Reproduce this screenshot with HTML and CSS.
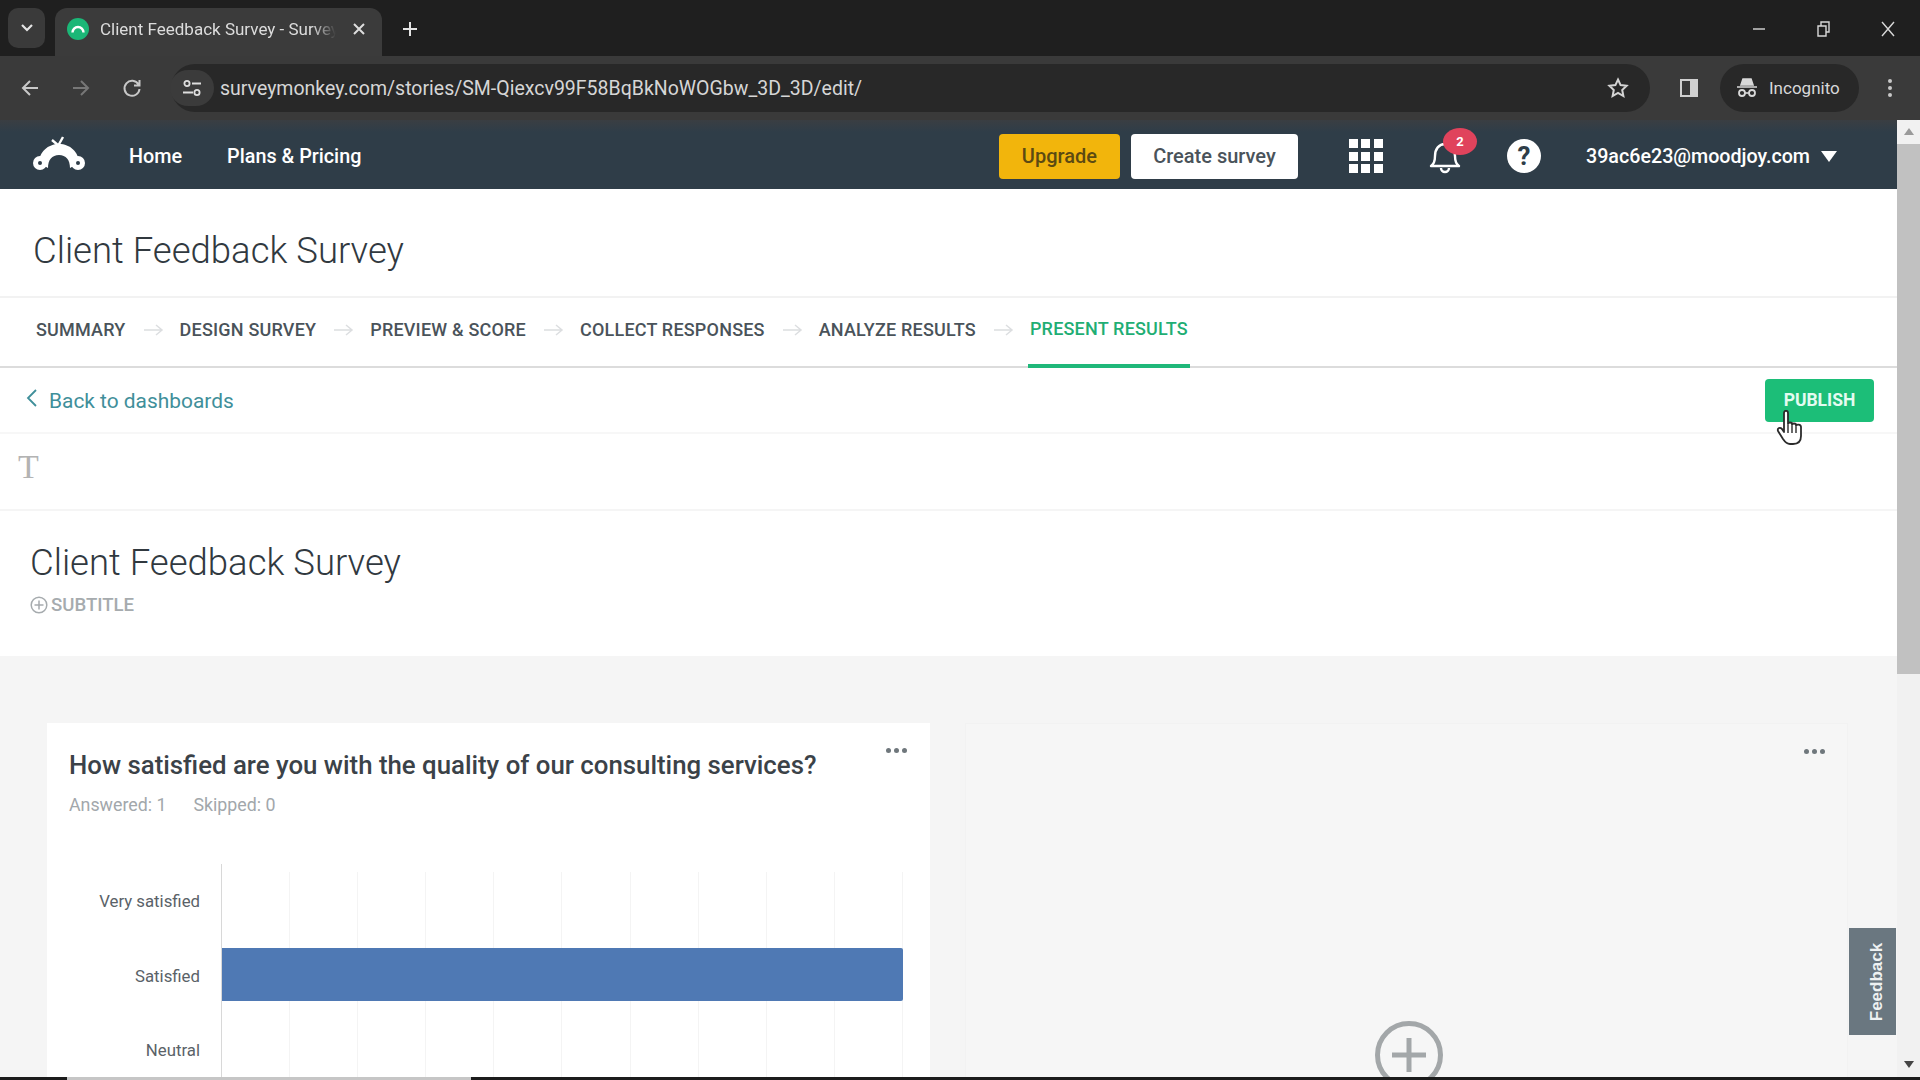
FILE: index.html
```html
<!DOCTYPE html>
<html lang="en">
<head>
    <meta charset="UTF-8">
    <title>Client Feedback Survey - SurveyMonkey</title>
    <link rel="stylesheet" href="styles.css">
</head>
<body>
    <!-- browser chrome -->
    <div class="tabstrip">
        <div class="tab-search">
            <svg width="14" height="10" viewBox="0 0 14 10"><path d="M2 2l5 5 5-5" fill="none" stroke="#e4e4e4" stroke-width="2.2"/></svg>
        </div>
        <div class="tab">
            <span class="favicon">
                <svg width="16" height="12" viewBox="0 0 16 12"><path d="M2.5 9.5a5.5 5.5 0 0 1 11 0" fill="none" stroke="#fff" stroke-width="2.4"/></svg>
            </span>
            <span class="tab-title">Client Feedback Survey - Survey</span>
            <svg class="tab-close" width="14" height="14" viewBox="0 0 14 14"><path d="M2 2l10 10M12 2L2 12" stroke="#ddd" stroke-width="2"/></svg>
        </div>
        <svg class="tab-new" width="18" height="18" viewBox="0 0 18 18"><path d="M9 2v14M2 9h14" stroke="#e4e4e4" stroke-width="2"/></svg>
        <div class="win-controls">
            <svg width="14" height="14" viewBox="0 0 14 14"><path d="M1 7h12" stroke="#d8d8d8" stroke-width="1.4"/></svg>
            <svg width="16" height="16" viewBox="0 0 16 16"><path d="M3 5h8v10H3zM6 5V1h8v10h-3" fill="none" stroke="#d8d8d8" stroke-width="1.4"/></svg>
            <svg width="16" height="16" viewBox="0 0 16 16"><path d="M2 1l12 14M14 1L2 15" stroke="#d8d8d8" stroke-width="1.4"/></svg>
        </div>
    </div>
    <div class="toolbar">
        <svg class="tool-btn" width="20" height="20" viewBox="0 0 20 20"><path d="M18 10H3M10 3l-7 7 7 7" fill="none" stroke="#c8c8c8" stroke-width="2"/></svg>
        <svg class="tool-btn" width="20" height="20" viewBox="0 0 20 20"><path d="M2 10h15M10 3l7 7-7 7" fill="none" stroke="#777" stroke-width="2"/></svg>
        <svg class="tool-btn" width="20" height="20" viewBox="0 0 20 20"><path d="M16.500 6.500A7.500 7.500 0 1 0 17.500 11M17.500 2v5.500H12" fill="none" stroke="#c8c8c8" stroke-width="2"/></svg>
        <div class="omnibox">
            <span class="site-info">
                <svg width="20" height="18" viewBox="0 0 20 18"><circle cx="5" cy="4.500" r="2.600" fill="none" stroke="#ddd" stroke-width="1.800"/><path d="M10 4.500h9M1 13.500h10" stroke="#ddd" stroke-width="2"/><circle cx="15" cy="13.500" r="2.600" fill="none" stroke="#ddd" stroke-width="1.800"/></svg>
            </span>
            <span class="url">surveymonkey.com/stories/SM-Qiexcv99F58BqBkNoWOGbw_3D_3D/edit/</span>
            <svg class="star" width="22" height="22" viewBox="0 0 22 22"><path d="M11 2.500l2.600 5.600 6 .7-4.400 4.200 1.200 6L11 16l-5.400 3 1.200-6L2.400 8.800l6-.7z" fill="none" stroke="#d4d4d4" stroke-width="2"/></svg>
        </div>
        <svg class="side-panel" width="20" height="20" viewBox="0 0 20 20"><rect x="1" y="1" width="18" height="18" fill="#d0d0d0"/><rect x="3" y="3" width="8" height="14" fill="#3a3a3a"/></svg>
        <div class="incognito">
            <svg width="22" height="22" viewBox="0 0 22 22"><path d="M7 2h8l2 6H5zM1 10h20" fill="#d8d8d8" stroke="#d8d8d8" stroke-width="1.600"/><circle cx="6" cy="16" r="3" fill="none" stroke="#d8d8d8" stroke-width="1.800"/><circle cx="16" cy="16" r="3" fill="none" stroke="#d8d8d8" stroke-width="1.800"/><path d="M9 16h4" stroke="#d8d8d8" stroke-width="1.600"/></svg>
            <span>Incognito</span>
        </div>
        <div class="kebab"><i></i><i></i><i></i></div>
    </div>

    <div class="viewport">
        <div class="page">
            <!-- site nav -->
            <nav class="topnav">
                <svg class="logo" width="52" height="38" viewBox="0 0 52 38">
                    <path d="M6 27C6 16 15 8 26 8s20 8 20 19l-9 5c0-8-4-13-11-13s-11 5-11 13z" fill="#fff"/>
                    <circle cx="7" cy="27" r="7" fill="#fff"/><circle cx="45" cy="27" r="7" fill="#fff"/>
                    <circle cx="7" cy="27" r="2" fill="#2f3d48"/><circle cx="45" cy="27" r="2" fill="#2f3d48"/>
                    <path d="M25 10l5-9M26 10L19 4" stroke="#fff" stroke-width="2.400"/>
                </svg>
                <a class="nav-link home">Home</a>
                <a class="nav-link">Plans &amp; Pricing</a>
                <div class="nav-right">
                    <button class="btn-upgrade">Upgrade</button>
                    <button class="btn-create">Create survey</button>
                    <div class="apps">
                        <i></i><i></i><i></i><i></i><i></i><i></i><i></i><i></i><i></i>
                    </div>
                    <div class="bell">
                        <svg width="34" height="38" viewBox="0 0 34 38"><path d="M3 29c3-2 4-5 4-10 0-7 4-12 10-12s10 5 10 12c0 5 1 8 4 10z" fill="none" stroke="#fff" stroke-width="2.400" stroke-linejoin="round"/><path d="M13 31a4 4 0 0 0 8 0" fill="none" stroke="#fff" stroke-width="2.400"/></svg>
                        <span class="badge">2</span>
                    </div>
                    <div class="help">?</div>
                    <div class="account">39ac6e23@moodjoy.com</div>
                    <svg class="caret" width="16" height="11" viewBox="0 0 16 11"><path d="M0 0h16L8 11z" fill="#fff"/></svg>
                </div>
            </nav>

            <header class="survey-head">
                <h1>Client Feedback Survey</h1>
            </header>

            <div class="steps">
                <a class="step">Summary</a><svg class="arrow" width="54" height="14" viewBox="0 0 54 14"><path d="M18 7h18M30 2l6 5-6 5" fill="none" stroke="#dcdee0" stroke-width="1.500"/></svg>
                <a class="step">Design Survey</a><svg class="arrow" width="54" height="14" viewBox="0 0 54 14"><path d="M18 7h18M30 2l6 5-6 5" fill="none" stroke="#dcdee0" stroke-width="1.500"/></svg>
                <a class="step">Preview &amp; Score</a><svg class="arrow" width="54" height="14" viewBox="0 0 54 14"><path d="M18 7h18M30 2l6 5-6 5" fill="none" stroke="#dcdee0" stroke-width="1.500"/></svg>
                <a class="step">Collect Responses</a><svg class="arrow" width="54" height="14" viewBox="0 0 54 14"><path d="M18 7h18M30 2l6 5-6 5" fill="none" stroke="#dcdee0" stroke-width="1.500"/></svg>
                <a class="step">Analyze Results</a><svg class="arrow" width="54" height="14" viewBox="0 0 54 14"><path d="M18 7h18M30 2l6 5-6 5" fill="none" stroke="#dcdee0" stroke-width="1.500"/></svg>
                <a class="step active">Present Results</a>
            </div>

            <div class="actions">
                <a class="back">
                    <svg width="12" height="20" viewBox="0 0 12 20"><path d="M10 2L2 10l8 8" fill="none" stroke="#3f8f9a" stroke-width="1.800"/></svg>
                    Back to dashboards
                </a>
                <button class="btn-publish">PUBLISH</button>
            </div>

            <div class="format-bar"><span class="t-icon">T</span></div>

            <div class="story-head">
                <h2>Client Feedback Survey</h2>
                <div class="subtitle">
                    <svg width="18" height="18" viewBox="0 0 18 18"><circle cx="9" cy="9" r="7.800" fill="none" stroke="#a6abae" stroke-width="1.500"/><path d="M9 4.500v9M4.500 9h9" stroke="#a6abae" stroke-width="1.500"/></svg>
                    SUBTITLE
                </div>
            </div>

            <div class="board">
                <section class="card">
                    <div class="dots"><i></i><i></i><i></i></div>
                    <h3>How satisfied are you with the quality of our consulting services?</h3>
                    <div class="counts"><span>Answered: 1</span><span>Skipped: 0</span></div>
                    <div class="chart">
                        <div class="labels">
                            <span>Very satisfied</span>
                            <span>Satisfied</span>
                            <span>Neutral</span>
                        </div>
                        <div class="plot">
                            <div class="gridlines"><i></i><i></i><i></i><i></i><i></i><i></i><i></i><i></i><i></i><i></i></div>
                            <div class="bar"></div>
                        </div>
                    </div>
                </section>
                <section class="card empty">
                    <div class="dots"><i></i><i></i><i></i></div>
                    <div class="add-tile">
                        <svg width="68" height="68" viewBox="0 0 68 68"><circle cx="34" cy="34" r="31.500" fill="none" stroke="#a3a7a9" stroke-width="5"/><path d="M34 17v34M17 34h34" stroke="#a3a7a9" stroke-width="5"/></svg>
                    </div>
                </section>
            </div>

            <a class="feedback"><span>Feedback</span></a>
            <svg class="hand" width="28" height="36" viewBox="0 0 28 36">
                <path d="M8 3c0-3 4-3 4 0v11c0-2 4-2 4 0v1c0-2 4-2 4 0v1c0-2 5-2 5 1v9c0 5-3 8-8 8h-3c-3 0-5-2-7-5l-5-8c-1-3 2-4 4-2l2 3z" fill="#fff" stroke="#2b2b2b" stroke-width="1.800" stroke-linejoin="round"/>
                <path d="M12 15v8M16 16v7M20 17v6" stroke="#2b2b2b" stroke-width="1.400"/>
            </svg>
        </div>
        <div class="scrollbar">
            <svg width="10" height="7" viewBox="0 0 10 7"><path d="M5 0l5 7H0z" fill="#9a9a9a"/></svg>
            <div class="scroll-track"><div class="scroll-thumb"></div></div>
            <svg width="10" height="7" viewBox="0 0 10 7"><path d="M5 7L0 0h10z" fill="#444"/></svg>
        </div>
    </div>

    <!-- video player strip along the bottom edge -->
    <div class="progress"><div class="progress-fill"></div></div>
</body>
</html>
```

FILE: styles.css
```css
* { box-sizing: border-box; }

html, body {
    margin: 0;
    height: 1080px;
    overflow: hidden;
    font-family: "Roboto", "Liberation Sans", sans-serif;
    background: #fff;
}

/* browser chrome */
.tabstrip {
    height: 56px;
    background: #1f1f1f;
    display: flex;
    align-items: flex-end;
    position: relative;
}
.tab-search {
    width: 37px;
    height: 40px;
    margin: 0 10px 8px 8px;
    background: #3a3a3a;
    border-radius: 10px;
    display: flex;
    align-items: center;
    justify-content: center;
}
.tab {
    width: 327px;
    height: 48px;
    background: #3b3b3b;
    border-radius: 12px 12px 0 0;
    display: flex;
    align-items: center;
    padding: 0 16px 6px 12px;
}
.favicon {
    width: 22px;
    height: 22px;
    flex: none;
    border-radius: 50%;
    background: #1bb777;
    display: flex;
    align-items: center;
    justify-content: center;
}
.tab-title {
    flex: 1;
    margin-left: 11px;
    color: #dcdcdc;
    font-size: 17px;
    white-space: nowrap;
    overflow: hidden;
    -webkit-mask-image: linear-gradient(to right, #000 90%, transparent 100%);
    mask-image: linear-gradient(to right, #000 90%, transparent 100%);
}
.tab-close { margin-left: 16px; flex: none; }
.tab-new { margin: 0 0 18px 19px; }
.win-controls {
    margin-left: auto;
    display: flex;
    align-items: center;
    gap: 49px;
    padding: 0 24px 19px 0;
}

.toolbar {
    height: 64px;
    background: #3a3a3a;
    display: flex;
    align-items: center;
    padding-left: 20px;
    position: relative;
}
.tool-btn { margin-right: 31px; flex: none; }
.tool-btn:nth-of-type(3) { margin-right: 29px; }
.omnibox {
    width: 1479px;
    height: 48px;
    background: #282828;
    border-radius: 24px;
    display: flex;
    align-items: center;
    flex: none;
}
.site-info {
    width: 44px;
    height: 36px;
    margin-left: -1px;
    border-radius: 18px;
    background: #3b3b3b;
    display: flex;
    align-items: center;
    justify-content: center;
}
.url {
    margin-left: 6px;
    margin-top: 1px;
    color: #d6d6d6;
    font-size: 19.500px;
    white-space: nowrap;
}
.star { margin-left: auto; margin-right: 21px; }
.side-panel { margin-left: 29px; flex: none; }
.incognito {
    margin-left: 21px;
    width: 139px;
    height: 48px;
    background: #282828;
    border-radius: 24px;
    display: flex;
    align-items: center;
    gap: 11px;
    padding-left: 16px;
    color: #d8d8d8;
    font-size: 17px;
    flex: none;
}
.kebab {
    margin-left: 29px;
    display: flex;
    flex-direction: column;
    gap: 3px;
}
.kebab i {
    width: 4px;
    height: 4px;
    border-radius: 50%;
    background: #c8c8c8;
}

.viewport {
    height: 960px;
    display: flex;
}
.page {
    width: 1897px;
    flex: none;
    position: relative;
    overflow: hidden;
}
.scrollbar {
    flex: 1;
    background: #f1f1f1;
    display: flex;
    flex-direction: column;
    align-items: center;
    padding: 8px 0 12px;
}
.scroll-track { flex: 1; width: 100%; padding: 8px 0 8px; }
.scroll-thumb { height: 530px; margin-top: 1px; background: #c1c1c1; }

/* site nav */
.topnav {
    height: 69px;
    background: linear-gradient(#3a3e42, #2f3d48 12px);
    display: flex;
    align-items: center;
    padding: 3px 0 0 33px;
}
.logo { flex: none; margin-right: 44px; margin-top: -2px; }
.nav-link {
    color: #fff;
    font-size: 19.800px;
    font-weight: 500;
    margin-right: 45px;
}
.nav-right {
    margin-left: auto;
    display: flex;
    align-items: center;
}
.btn-upgrade, .btn-create {
    height: 45px;
    border: none;
    border-radius: 4px;
    font-family: inherit;
    font-size: 20px;
    font-weight: 500;
}
.btn-upgrade { width: 121px; background: #f2b50c; color: #5c4a12; }
.btn-create { width: 167px; margin-left: 11px; background: #fff; color: #4a535a; }
.apps {
    width: 34px;
    margin-left: 51px;
    display: grid;
    grid-template-columns: repeat(3, 9px);
    grid-auto-rows: 9px;
    gap: 3.500px;
}
.apps i { background: #fff; }
.bell {
    position: relative;
    width: 34px;
    height: 38px;
    margin-left: 45px;
}
.badge {
    position: absolute;
    left: 15px;
    top: -9px;
    width: 34px;
    height: 27px;
    border-radius: 50%;
    background: #e0435c;
    color: #fff;
    font-size: 13px;
    font-weight: 700;
    display: flex;
    align-items: center;
    justify-content: center;
}
.help {
    width: 34px;
    height: 34px;
    margin-left: 45px;
    border-radius: 50%;
    background: #fff;
    color: #2f3d48;
    font-size: 26px;
    font-weight: 700;
    line-height: 34px;
    text-align: center;
}
.account {
    margin-left: 45px;
    color: #fff;
    font-size: 19.700px;
    font-weight: 500;
}
.caret { margin: 0 60px 0 11px; }

/* survey heading and steps */
.survey-head {
    height: 109px;
    border-bottom: 2px solid #f2f2f2;
    display: flex;
    align-items: center;
    padding: 16px 33px 0;
}
h1, h2 {
    margin: 0;
    font-size: 36.500px;
    font-weight: 300;
    color: #31393f;
}
.steps {
    height: 70px;
    border-bottom: 2px solid #dcdcdc;
    display: flex;
    align-items: center;
    padding-left: 36px;
}
.step {
    color: #4a535a;
    font-size: 18px;
    font-weight: 500;
    letter-spacing: .2px;
    text-transform: uppercase;
    white-space: nowrap;
    margin-top: -6px;
}
.step.active {
    color: #1fae74;
    height: 70px;
    margin: 0 0 -2px -2px;
    padding: 0 2px 6px;
    display: flex;
    align-items: center;
    border-bottom: 4px solid #1fb87a;
}
.arrow { flex: none; margin-top: -4px; }

.actions {
    height: 66px;
    border-bottom: 2px solid #f7f7f7;
    display: flex;
    align-items: center;
    padding: 0 23px 0 26px;
}
.back {
    display: flex;
    align-items: center;
    gap: 11px;
    color: #3f8f9a;
    font-size: 20.900px;
    margin-bottom: -1px;
}
.back svg { margin-top: -6px; }
.btn-publish {
    width: 109px;
    height: 43px;
    margin-left: auto;
    border: none;
    border-radius: 4px;
    background: #1cbe78;
    color: #e4fbf1;
    font-family: inherit;
    font-size: 17.500px;
    font-weight: 700;
}

.format-bar {
    height: 77px;
    border-bottom: 2px solid #f5f5f5;
    display: flex;
    align-items: center;
    padding: 0 0 10px 18px;
}
.t-icon {
    color: #b3b3b3;
    font-family: "Liberation Serif", serif;
    font-size: 34px;
    line-height: 1;
}

.story-head {
    height: 145px;
    padding: 31px 30px 0;
}
h2 { line-height: 42px; }
.subtitle {
    display: flex;
    align-items: center;
    gap: 3px;
    margin-top: 10px;
    color: #a6abae;
    font-size: 18.600px;
    font-weight: 500;
}

/* board with chart tiles */
.board {
    height: 421px;
    background: #f5f5f5;
    padding: 67px 47px 0;
    display: flex;
    gap: 35px;
}
.card {
    width: 883px;
    flex: none;
    height: 420px;
    background: #fff;
    position: relative;
    padding: 24px 22px;
}
.card.empty {
    background: #f6f6f6;
    border: 1px solid #f2f2f2;
}
.dots {
    position: absolute;
    top: 25px;
    right: 23px;
    display: flex;
    gap: 3px;
}
.dots i {
    width: 5px;
    height: 5px;
    border-radius: 50%;
    background: #6f777c;
}
.card.empty .dots { right: 22px; }
h3 {
    margin: 0;
    color: #3b4248;
    font-size: 25.800px;
    font-weight: 500;
    line-height: 36px;
    white-space: nowrap;
}
.counts {
    display: flex;
    gap: 27px;
    margin-top: 11px;
    color: #a2a7ab;
    font-size: 17.800px;
    line-height: 22px;
}
.chart {
    display: flex;
    margin-top: 48px;
}
.labels {
    width: 131px;
    margin-right: 21px;
    padding-top: 27px;
    display: flex;
    flex-direction: column;
    gap: 54.500px;
    text-align: right;
    color: #5a6268;
    font-size: 16.800px;
    line-height: 20px;
}
.plot {
    width: 682px;
    height: 220px;
    position: relative;
    border-left: 1px solid #d8d8d8;
    padding-top: 84px;
}
.gridlines {
    position: absolute;
    inset: 8px 0 0 0;
    display: flex;
}
.gridlines i {
    flex: 1;
    border-right: 1px solid #f4f4f4;
}
.bar {
    position: relative;
    height: 53px;
    background: #4f79b4;
    border-radius: 0 2px 2px 0;
}
.add-tile {
    position: absolute;
    left: 409px;
    top: 297px;
}

/* overlays */
.feedback {
    position: absolute;
    left: 1849px;
    top: 808px;
    width: 47px;
    height: 107px;
    background: #6a7780;
    display: flex;
    align-items: center;
    justify-content: center;
    padding-left: 9px;
}
.feedback span {
    color: #eef1f2;
    font-family: "Liberation Sans", sans-serif;
    font-size: 17px;
    font-weight: 700;
    transform: rotate(-90deg);
}
.hand {
    position: absolute;
    left: 1776px;
    top: 290px;
}

.progress {
    position: absolute;
    left: 0;
    right: 0;
    top: 1077px;
    height: 3px;
    background: #1c1c1c;
}
.progress-fill {
    width: 404px;
    height: 3px;
    margin-left: 67px;
    background: #c6c6c6;
}
```
